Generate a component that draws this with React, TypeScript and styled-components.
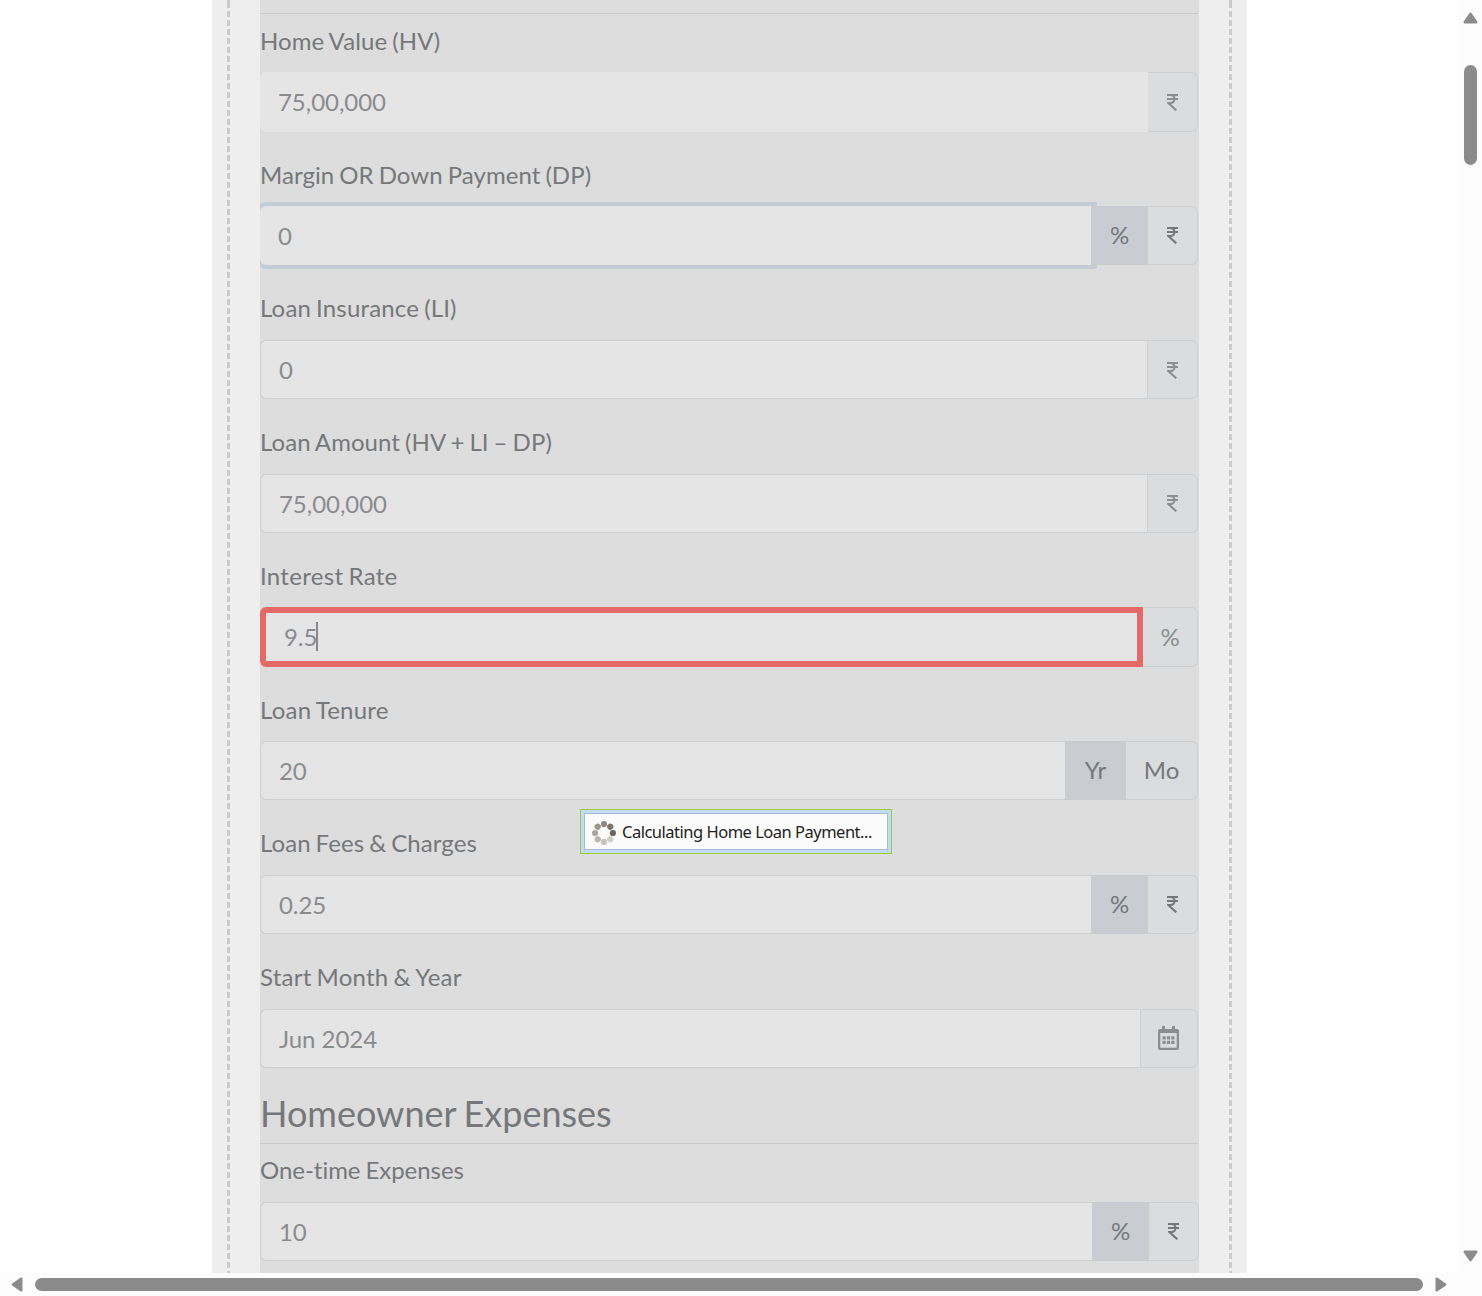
import React from "react";
import styled, { createGlobalStyle, css } from "styled-components";

const GlobalStyle = createGlobalStyle`
  *, *::before, *::after { box-sizing: border-box; }
  html, body { margin: 0; padding: 0; overflow: hidden; background: #fff; }
  body { font-family: Lato, "Liberation Sans", sans-serif; font-variant-ligatures: none; }
`;

const Window = styled.div`
  position: relative;
  display: grid;
  grid-template-columns: 1459px 23px;
  grid-template-rows: 1273px 23px;
  width: 1482px;
  height: 1296px;
  overflow: hidden;
  background: #fcfcfc;
`;

const Page = styled.main`
  display: flex;
  padding-left: 212px;
  overflow: hidden;
  background: #fff;
`;

const Sheet = styled.div`
  display: flex;
  width: 1035px;
  padding: 0 15px;
  background: #eee;
`;

const Dashes = styled.div`
  width: 3px;
  background: repeating-linear-gradient(to bottom, #cbcbcb 0 6px, transparent 6px 9px) 0 2px;
`;

const Form = styled.form`
  width: 939px;
  margin: 0 30px;
  overflow: hidden;
  background: #ddd;
  color: #75787a;
`;

const TopRule = styled.div`
  width: 938px;
  height: 14.3px;
  margin-top: -0.3px;
  border-bottom: 1px solid #cacccc;
`;

const Section = styled.section<{ $width: number }>`
  width: ${(p) => p.$width}px;
`;

const Field = styled.div`
  height: 133.78px;
`;

const Label = styled.label<{ $tracking: number }>`
  display: block;
  height: 58.3px;
  padding-top: 8.78px;
  font-size: 24px;
  line-height: 36px;
  letter-spacing: ${(p) => p.$tracking}px;
  word-spacing: -1.2px;
  white-space: nowrap;
`;

const Group = styled.div`
  display: flex;
  height: 59.25px;
`;

type Tone = "plain" | "borderless" | "focused" | "error";

const tones = {
  plain: css`
    border: 1px solid #cdd0d2;
    border-right: 0;
  `,
  borderless: css`
    border: 0;
  `,
  focused: css`
    border: 0;
    box-shadow: 0 0 0 4px #c4cdd5, 2px 0 0 4px #c4cdd5;
  `,
  error: css`
    border: 6px solid #e56969;
  `,
};

const Input = styled.div<{ $tone: Tone }>`
  display: flex;
  flex: 1;
  align-items: center;
  padding: 1px 0 0 18px;
  border-radius: 6px 0 0 6px;
  background: #e5e5e5;
  color: #898c8e;
  font-size: 24px;
  line-height: 36px;
  letter-spacing: -0.05px;
  ${(p) => tones[p.$tone]}
`;

const Caret = styled.span`
  width: 2px;
  height: 29px;
  margin: 0 0 2px -1px;
  background: #85898c;
`;

const Addon = styled.div<{ $width: number; $active?: boolean; $dark?: boolean; $divider?: boolean; $last?: boolean }>`
  position: relative;
  display: flex;
  flex: none;
  align-items: center;
  justify-content: center;
  width: ${(p) => p.$width}px;
  padding-bottom: ${(p) => (p.$dark ? 1.5 : 0)}px;
  border: 1px solid ${(p) => (p.$active ? "#c7ccd0" : "#cdd0d3")};
  border-left-width: ${(p) => (p.$divider ? 1 : 0)}px;
  border-right-width: ${(p) => (p.$last ? 1 : 0)}px;
  border-radius: ${(p) => (p.$last ? "0 6px 6px 0" : "0")};
  background: ${(p) => (p.$active ? "#c9cdd2" : "#dadcde")};
  color: ${(p) => (p.$dark ? "#75787a" : "#8b8e90")};
  font-size: 24px;
  line-height: 36px;
`;

const RupeeGlyph = styled.svg<{ $drop?: boolean }>`
  margin: 1.4px 1px 0 0;
`;

const CalendarGlyph = styled.svg`
  margin-right: 1px;
`;

const Heading = styled.h2`
  height: 59.5px;
  margin: 0;
  padding-top: 2px;
  border-bottom: 1px solid #cacccc;
  font-size: 36px;
  font-weight: 400;
  line-height: 54px;
  word-spacing: -1.5px;
  white-space: nowrap;
`;

const Toast = styled.div`
  position: absolute;
  left: 580px;
  top: 809px;
  width: 312px;
  height: 45px;
  padding: 3px;
  border: 1px solid #9acd32;
  background: #c3daf9;
`;

const ToastBody = styled.div`
  display: flex;
  align-items: center;
  height: 37px;
  padding: 2px 0 0 7px;
  border: 1px solid #a3bad9;
  background: #fbfbfb;
  color: #222;
`;

const ToastText = styled.span`
  margin: -2px 0 0 6px;
  font-family: "Noto Sans", "DejaVu Sans", sans-serif;
  font-size: 16.5px;
  letter-spacing: -0.5px;
  white-space: nowrap;
`;

const VerticalBar = styled.div`
  display: flex;
  flex-direction: column;
  align-items: center;
  padding: 12px 0 11px;
`;

const VerticalThumb = styled.div`
  width: 13px;
  height: 100px;
  margin: 41px 0 auto;
  border-radius: 7px;
  background: #8b8b8b;
`;

const HorizontalBar = styled.div`
  display: flex;
  align-items: center;
  padding-left: 11px;
`;

const HorizontalThumb = styled.div`
  width: 1388px;
  height: 13px;
  margin: 0 12px;
  border-radius: 7px;
  background: #8b8b8b;
`;

const Arrow = ({ angle }: { angle: number }) => {
  const sideways = angle % 180 !== 0;
  return (
    <svg width={sideways ? 12 : 15} height={sideways ? 15 : 12} viewBox={sideways ? "1.5 -1.5 12 15" : "0 0 15 12"}>
      <path
        d="M6.4 1.2Q7.5 0 8.6 1.2L14.3 9.4Q15 11.3 13.4 11.5H1.6Q0 11.3.7 9.4Z"
        fill="#8b8b8b"
        transform={`rotate(${angle} 7.5 6)`}
      />
    </svg>
  );
};

const Rupee = () => (
  <RupeeGlyph width="11" height="17" viewBox="0 0 11 17" fill="none" stroke="currentColor">
    <path d="M0 1H11M0 5H11" strokeWidth="1.9" />
    <path d="M.5 1H3.5C8.8 1 8.8 9 3.5 9H1.3L9.3 16.3" strokeWidth="2.1" />
  </RupeeGlyph>
);

const Calendar = () => (
  <CalendarGlyph width="21" height="24" viewBox="0 0 21 24" fill="currentColor">
    <path d="M4 0h3v4H4zM14 0h3v4h-3z" />
    <path fillRule="evenodd" d="M2 3h17a2 2 0 0 1 2 2v17a2 2 0 0 1-2 2H2a2 2 0 0 1-2-2V5a2 2 0 0 1 2-2ZM2.3 7v14.8h16.4V7Z" />
    <path d="M4.5 10.2h3.2v3.2H4.5zM8.9 10.2h3.2v3.2H8.9zM13.3 10.2h3.2v3.2h-3.2zM4.5 14.8h3.2V18H4.5zM8.9 14.8h3.2V18H8.9zM13.3 14.8h3.2V18h-3.2z" />
  </CalendarGlyph>
);

const spokes = ["#8d8980", "#7b756b", "#6b6459", "#d0cec7", "#c6c3bb", "#bab6ad", "#aaa69d", "#9b978d"];

const Spinner = () => (
  <svg width="24" height="24" viewBox="0 0 24 24">
    {spokes.map((fill, i) => (
      <circle key={fill} cx="12" cy="3.1" r="3.1" fill={fill} transform={`rotate(${i * 45} 12 12)`} />
    ))}
  </svg>
);

const PercentOrRupee = () => (
  <>
    <Addon $width={57} $active $dark>%</Addon>
    <Addon $width={50} $dark $last><Rupee /></Addon>
  </>
);

interface FieldRow {
  label: string;
  tracking: number;
  value: string;
  tone?: Tone;
  addon: React.ReactNode;
}

const rupeeAddon = (divider: boolean) => (
  <Addon $width={divider ? 51 : 50} $divider={divider} $last><Rupee /></Addon>
);

const fields: FieldRow[] = [
  { label: "Home Value (HV)", tracking: 0.1, value: "75,00,000", tone: "borderless", addon: rupeeAddon(false) },
  { label: "Margin OR Down Payment (DP)", tracking: 0.06, value: "0", tone: "focused", addon: <PercentOrRupee /> },
  { label: "Loan Insurance (LI)", tracking: 0.16, value: "0", addon: rupeeAddon(true) },
  { label: "Loan Amount (HV + LI – DP)", tracking: 0.07, value: "75,00,000", addon: rupeeAddon(true) },
  { label: "Interest Rate", tracking: 0.3, value: "9.5", tone: "error", addon: <Addon $width={55} $last>%</Addon> },
  {
    label: "Loan Tenure",
    tracking: 0.22,
    value: "20",
    addon: (
      <>
        <Addon $width={61} $active $dark>Yr</Addon>
        <Addon $width={72} $dark $last>Mo</Addon>
      </>
    ),
  },
  { label: "Loan Fees & Charges", tracking: 0.06, value: "0.25", addon: <PercentOrRupee /> },
  {
    label: "Start Month & Year",
    tracking: 0.22,
    value: "Jun 2024",
    addon: <Addon $width={58} $divider $last><Calendar /></Addon>,
  },
];

const FormField = ({ label, tracking, value, tone = "plain", addon }: FieldRow) => (
  <Field>
    <Label $tracking={tracking}>{label}</Label>
    <Group>
      <Input $tone={tone}>
        {value}
        {tone === "error" && <Caret />}
      </Input>
      {addon}
    </Group>
  </Field>
);

export default function App() {
  return (
    <Window>
      <GlobalStyle />
      <Page>
        <Sheet>
          <Dashes />
          <Form>
            <TopRule />
            <Section $width={938}>
              {fields.map((field) => (
                <FormField key={field.label} {...field} />
              ))}
            </Section>
            <Section $width={939}>
              <Heading>Homeowner Expenses</Heading>
              <FormField label="One-time Expenses" tracking={-0.03} value="10" addon={<PercentOrRupee />} />
            </Section>
          </Form>
          <Dashes />
        </Sheet>
      </Page>
      <VerticalBar>
        <Arrow angle={0} />
        <VerticalThumb />
        <Arrow angle={180} />
      </VerticalBar>
      <HorizontalBar>
        <Arrow angle={270} />
        <HorizontalThumb />
        <Arrow angle={90} />
      </HorizontalBar>
      <Toast>
        <ToastBody>
          <Spinner />
          <ToastText>Calculating Home Loan Payment...</ToastText>
        </ToastBody>
      </Toast>
    </Window>
  );
}
